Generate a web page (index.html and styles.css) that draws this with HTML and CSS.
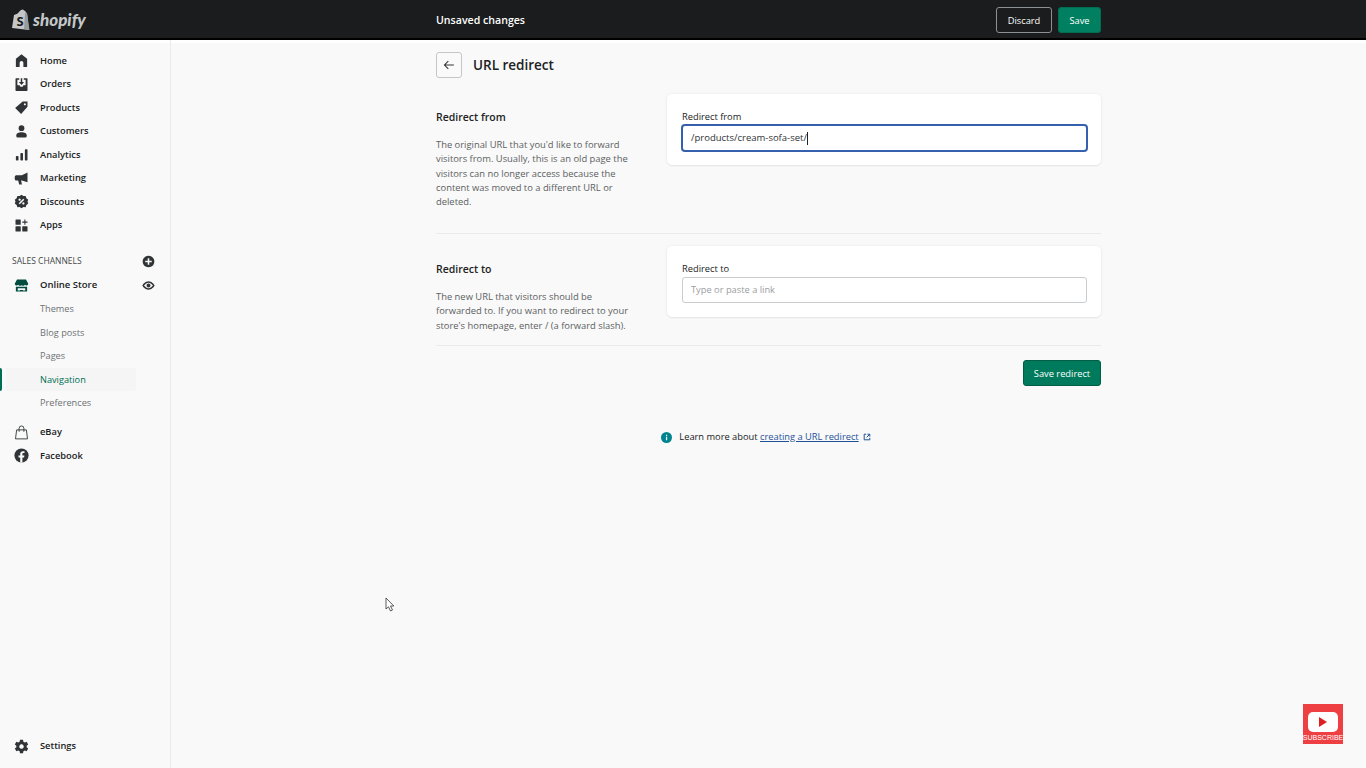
FILE: index.html
```html
<!doctype html>
<html>
<head>
    <meta charset="utf-8">
    <title>URL redirect</title>
    <link rel="stylesheet" href="styles.css">
</head>
<body>
<header class="topbar">
    <div class="logo">
        <svg class="logoBag" viewBox="0 0 20 22">
            <path fill="#c4c7c8" d="M1 19 3 6q4-1 5-3 1.500-2.500 3.500-2.500 1 0 1.500 1 1.500 0 2 2l1 .5L18 21z"/>
            <path fill="#989b9d" d="M14 3.800 16 4.300 18.500 21 13 20z"/>
            <text x="5.500" y="16.500" class="logoS">S</text>
        </svg>
        <span class="logoText">shopify</span>
    </div>
    <div class="barTitle">Unsaved changes</div>
    <div class="barActions">
        <button class="buttonDiscard">Discard</button>
        <button class="buttonSave">Save</button>
    </div>
</header>
<div class="frame">
    <nav class="sidebar">
        <a class="navItem">
            <svg class="navIcon" viewBox="0 0 20 20"><path d="M10 1.500 2.500 7.500V18.500H7.500V13a2.500 2.500 0 0 1 5 0V18.500H17.500V7.500z"/></svg>Home</a>
        <a class="navItem">
            <svg class="navIcon" viewBox="0 0 20 20"><path d="M3 1.500H7V3.500H4.500V11H7.500L8.500 13H11.500L12.500 11H15.500V3.500H13V1.500H17A1 1 0 0 1 18 2.500V17.500A1 1 0 0 1 17 18.500H3A1 1 0 0 1 2 17.500V2.500A1 1 0 0 1 3 1.500Z"/><path d="M9 1.500H11V6.500H13.500L10 10.500 6.500 6.500H9Z"/></svg>Orders</a>
        <a class="navItem">
            <svg class="navIcon" viewBox="0 0 20 20"><path fill-rule="evenodd" d="M11.500 2H18V9L9.500 18.500 1.500 10.500ZM14.500 4.200a1.400 1.400 0 1 0 .01 0Z"/></svg>Products</a>
        <a class="navItem">
            <svg class="navIcon" viewBox="0 0 20 20"><circle cx="10" cy="5.500" r="3.800"/><path d="M3 15.500C3 12 6 11 10 11S17 12 17 15.500V16A2 2 0 0 1 15 18H5A2 2 0 0 1 3 16Z"/></svg>Customers</a>
        <a class="navItem">
            <svg class="navIcon" viewBox="0 0 20 20"><rect x="2.500" y="12" width="3.500" height="6" rx="1"/><rect x="8.500" y="8" width="3.500" height="10" rx="1"/><rect x="14.500" y="3" width="3.500" height="15" rx="1"/></svg>Analytics</a>
        <a class="navItem">
            <svg class="navIcon" viewBox="0 0 20 20"><path d="M18 2V15L10.500 12.500H9.500L10.500 18H7L5.500 12.500H3A2 2 0 0 1 1 10.500V7.500A2 2 0 0 1 3 5.500H10.500Z"/></svg>Marketing</a>
        <a class="navItem">
            <svg class="navIcon" viewBox="0 0 20 20"><path fill-rule="evenodd" d="M10 1 12.500 2.800 15.500 2.500 16.500 5.500 19 7.500 18 10 19 12.500 16.500 14.500 15.500 17.500 12.500 17.200 10 19 7.500 17.200 4.500 17.500 3.500 14.500 1 12.500 2 10 1 7.500 3.500 5.500 4.500 2.500 7.500 2.800ZM12.300 6.300 6.300 12.300 7.700 13.700 13.700 7.700ZM7.500 6a1.500 1.500 0 1 0 .01 0ZM12.500 11a1.500 1.500 0 1 0 .01 0Z"/></svg>Discounts</a>
        <a class="navItem">
            <svg class="navIcon" viewBox="0 0 20 20"><rect x="2" y="2" width="7" height="7" rx=".8"/><rect x="2" y="11" width="7" height="7" rx=".8"/><rect x="11" y="11" width="7" height="7" rx=".8"/><path d="M13.800 2H15.200V4.800H18V6.200H15.200V9H13.800V6.200H11V4.800H13.800Z"/></svg>Apps</a>

        <div class="channels">
            <span>SALES CHANNELS</span>
            <svg class="sideAction" viewBox="0 0 20 20"><path fill-rule="evenodd" d="M10 1a9 9 0 1 0 .01 0ZM8.800 5H11.200V8.800H15V11.200H11.200V15H8.800V11.200H5V8.800H8.800Z"/></svg>
        </div>
        <a class="navItem storeItem">
            <svg class="navIcon" viewBox="0 0 20 20"><path class="storeFill" d="M4 2H16L19 7.500A2.500 2.500 0 0 1 14.500 9 2.800 2.800 0 0 1 10 9.500 2.800 2.800 0 0 1 5.500 9 2.500 2.500 0 0 1 1 7.500Z"/><path class="storeFill" d="M2.500 11.500H5V18H2.500ZM15 11.500H17.500V18H15ZM5 11.500H15V13.500H5ZM8 16H12V18H8ZM5 16.500H8V18H5ZM12 16.500H15V18H12Z"/></svg>
            <span class="navGrow">Online Store</span>
            <svg class="sideAction" viewBox="0 0 20 20"><path fill-rule="evenodd" d="M10 3.500C5 3.500 1.500 8 .5 10 1.500 12 5 16.500 10 16.500S18.500 12 19.500 10C18.500 8 15 3.500 10 3.500ZM10 5.800C13 5.800 15.500 8.500 16.900 10 15.500 11.500 13 14.200 10 14.200S4.500 11.500 3.100 10C4.500 8.500 7 5.800 10 5.800ZM10 7a3 3 0 1 0 .01 0Z"/></svg>
        </a>
        <a class="subItem">Themes</a>
        <a class="subItem">Blog posts</a>
        <a class="subItem">Pages</a>
        <a class="subItem subActive">Navigation</a>
        <a class="subItem">Preferences</a>
        <a class="navItem ebayItem">
            <svg class="navIcon" viewBox="0 0 20 20"><path class="bagLine" d="M3.500 6.500H16.500L18 18.500H2ZM6.800 9V4.500a3.200 3.200 0 0 1 6.400 0V9"/></svg>eBay</a>
        <a class="navItem">
            <svg class="navIcon" viewBox="0 0 20 20"><circle cx="10" cy="10" r="9.500"/><path class="fbF" d="M8.300 19.500V12.500H6V10H8.300V8C8.300 5.500 9.700 4.300 12 4.300H14V6.800H12.700C11.600 6.800 11.200 7.300 11.200 8.200V10H13.900L13.400 12.500H11.200V19.500Z"/></svg>Facebook</a>
        <a class="navItem settingsItem">
            <svg class="navIcon" viewBox="0 0 20 20"><path fill-rule="evenodd" d="M8 1H12L12.500 3.600 14.400 4.700 16.900 3.800 18.900 7.200 16.900 8.900V11.100L18.900 12.800 16.900 16.200 14.400 15.300 12.500 16.400 12 19H8L7.500 16.400 5.600 15.300 3.100 16.200 1.100 12.800 3.100 11.100V8.900L1.100 7.200 3.100 3.800 5.600 4.700 7.500 3.600ZM10 7a3 3 0 1 0 .01 0Z"/></svg>Settings</a>
    </nav>
    <main class="main">
        <div class="page">
            <div class="pageHeader">
                <button class="backButton">
                    <svg viewBox="0 0 20 20"><path d="M17 10H3.500M9 4.500 3.500 10 9 15.500"/></svg>
                </button>
                <h1>URL redirect</h1>
            </div>
            <section class="formRow firstRow">
                <div class="rowInfo">
                    <h2>Redirect from</h2>
                    <p>The original URL that you'd like to forward visitors from. Usually, this is an old page the visitors can no longer access because the content was moved to a different URL or deleted.</p>
                </div>
                <div class="card">
                    <label>Redirect from</label>
                    <div class="inputFocus">/products/cream-sofa-set/<span class="caret"></span></div>
                </div>
            </section>
            <section class="formRow secondRow">
                <div class="rowInfo">
                    <h2>Redirect to</h2>
                    <p>The new URL that visitors should be forwarded to. If you want to redirect to your store's homepage, enter / (a forward slash).</p>
                </div>
                <div class="card">
                    <label>Redirect to</label>
                    <div class="inputEmpty">Type or paste a link</div>
                </div>
            </section>
            <div class="pageActions">
                <button class="buttonSaveRedirect">Save redirect</button>
            </div>
            <div class="learnMore">
                <svg class="infoIcon" viewBox="0 0 20 20"><circle cx="10" cy="10" r="10"/><rect class="infoMark" x="9" y="8.500" width="2.200" height="6.500"/><rect class="infoMark" x="9" y="5" width="2.200" height="2.200"/></svg>
                <span>Learn more about <a class="learnLink">creating a URL redirect</a></span>
                <svg class="extIcon" viewBox="0 0 20 20"><path d="M8 3H3V17H17V12M11 3H17V9M17 3 9 11"/></svg>
            </div>
        </div>
    </main>
</div>
<svg class="cursor" viewBox="0 0 10 15"><path d="M1 1V12L3.500 9.800 5.500 14 7.500 13 5.500 9H8.800Z"/></svg>
<div class="subscribe">
    <div class="playBox"><span class="playTriangle"></span></div>
    <div class="subscribeText">SUBSCRIBE</div>
</div>
</body>
</html>
```

FILE: styles.css
```css
html, body {
    margin: 0;
    height: 100%;
    overflow: hidden;
}

body {
    display: flex;
    flex-direction: column;
    color: #202223;
    background-color: #f9f9f9;
    font-family: "Open Sans", "Noto Sans", sans-serif;
    font-size: 9.3px;
    line-height: 14.300px;
}

button {
    font-family: inherit;
    font-size: 9.3px;
    padding: 0;
    cursor: pointer;
}

/* top bar */
.topbar {
    flex: none;
    box-sizing: border-box;
    height: 40px;
    padding-top: 2px;
    display: flex;
    align-items: center;
    background-color: #1a1c1d;
    border-bottom: 2px solid #000;
    color: #fff;
}

.logo {
    width: 436px;
    display: flex;
    align-items: center;
    padding-left: 11px;
    box-sizing: border-box;
}

.logoBag {
    width: 20px;
    height: 22px;
    margin-right: 2px;
}

.logoS {
    font-family: "Open Sans", sans-serif;
    font-size: 13px;
    font-weight: 700;
    fill: #1a1c1d;
}

.logoText {
    font-family: "Lato", sans-serif;
    font-size: 17px;
    font-weight: 900;
    font-style: italic;
    color: #c4c7c8;
}

.barTitle {
    font-size: 10.600px;
    font-weight: 600;
    flex: 1;
}

.barActions {
    display: flex;
    gap: 6px;
    margin-right: 265px;
}

.buttonDiscard {
    width: 56px;
    height: 26px;
    color: #fff;
    background-color: #1a1c1d;
    border: 1px solid #8c9196;
    border-radius: 3px;
}

.buttonSave {
    width: 43px;
    height: 26px;
    color: #fff;
    background-color: #008060;
    border: 1px solid #006e52;
    border-radius: 3px;
}

/* sidebar */
.frame {
    flex: 1;
    display: flex;
    min-height: 0;
    box-shadow: inset 0 3px 0 #fff;
}

.sidebar {
    flex: none;
    box-sizing: border-box;
    width: 171px;
    display: flex;
    flex-direction: column;
    padding-top: 9.200px;
    border-right: 1px solid #ebebeb;
}

.navItem {
    height: 23.500px;
    display: flex;
    align-items: center;
    padding-left: 14px;
    font-weight: 600;
    color: #202223;
}

.navIcon {
    width: 15px;
    height: 15px;
    margin-right: 11px;
    fill: #303436;
    flex: none;
}

.navGrow {
    flex: 1;
    font-size: 9.500px;
}

.channels {
    display: flex;
    align-items: center;
    justify-content: space-between;
    height: 14px;
    margin-top: 17.300px;
    padding: 0 15px 0 12px;
    font-size: 8.500px;
    color: #44474a;
}

.sideAction {
    width: 13px;
    height: 13px;
    fill: #303436;
}

.storeItem {
    margin-top: 5px;
    margin-bottom: 0.500px;
    padding-right: 15px;
}

.storeFill {
    fill: #004c3f;
}

.subItem {
    height: 23.500px;
    display: flex;
    align-items: center;
    padding-left: 40px;
    margin-right: 34px;
    font-size: 9.200px;
    color: #6d7175;
    position: relative;
}

.subActive {
    color: #006e52;
    background-color: #f4f5f4;
    border-radius: 0 3px 3px 0;
    margin-left: 6px;
    padding-left: 34px;
}

.subActive::before {
    content: "";
    position: absolute;
    left: -6px;
    top: 0;
    bottom: 0;
    width: 2px;
    background-color: #006e52;
    border-radius: 0 2px 2px 0;
}

.ebayItem {
    margin-top: 5.500px;
}

.bagLine {
    fill: none;
    stroke: #303436;
    stroke-width: 1.200;
}

.fbF {
    fill: #f9f9f9;
}

.settingsItem {
    margin-top: auto;
    margin-bottom: 10px;
}

/* main column */
.main {
    flex: 1;
    min-width: 0;
}

.page {
    width: 665px;
    margin: 0 auto;
}

.pageHeader {
    display: flex;
    align-items: center;
    padding-top: 12px;
    margin-bottom: 16px;
}

.backButton {
    box-sizing: border-box;
    width: 26px;
    height: 26px;
    margin-right: 11px;
    background-color: #fafafa;
    border: 1px solid #c4c7c9;
    border-radius: 3px;
    display: flex;
    align-items: center;
    justify-content: center;
}

.backButton svg {
    width: 14px;
    height: 14px;
    fill: none;
    stroke: #303436;
    stroke-width: 1.500;
}

h1 {
    margin: 0;
    padding-top: 1px;
    font-size: 13.500px;
    font-weight: 600;
    line-height: 25px;
    color: #202223;
}

.formRow {
    display: flex;
    justify-content: space-between;
    align-items: flex-start;
}

.firstRow {
    height: 139px;
    border-bottom: 1px solid #ebebeb;
}

.secondRow {
    height: 99px;
    padding-top: 12px;
    border-bottom: 1px solid #ebebeb;
}

.rowInfo {
    width: 200px;
    padding-top: 16px;
}

h2 {
    margin: 0 0 14px;
    font-size: 10.500px;
    font-weight: 600;
    line-height: 14px;
}

.rowInfo p {
    margin: 0;
    font-size: 9.400px;
    color: #5c5f62;
}

.card {
    box-sizing: border-box;
    width: 434px;
    height: 71px;
    padding: 15.500px 15px 0;
    background-color: #fff;
    border-radius: 5px;
    box-shadow: 0 0 3px rgba(23, 24, 24, 0.07), 0 1px 2px rgba(0, 0, 0, 0.06);
}

label {
    display: block;
    color: #202223;
    line-height: 14px;
}

.inputFocus {
    box-sizing: border-box;
    height: 28px;
    margin: 0.500px -2px 0 -1px;
    padding: 0 8px;
    display: flex;
    align-items: center;
    font-size: 9.500px;
    color: #303436;
    border: 2px solid #3560ad;
    border-radius: 4px;
}

.caret {
    width: 1px;
    height: 13px;
    background-color: #202223;
}

.inputEmpty {
    box-sizing: border-box;
    height: 26px;
    margin: 1.500px -1px 0 0;
    padding: 0 8px;
    display: flex;
    align-items: center;
    color: #9a9da0;
    border: 1px solid #c9cccf;
    border-radius: 3px;
}

.pageActions {
    display: flex;
    justify-content: flex-end;
    padding-top: 14px;
}

.buttonSaveRedirect {
    width: 78px;
    height: 26px;
    color: #fff;
    background-color: #007a5c;
    border: 1px solid #005e46;
    border-radius: 3px;
}

.learnMore {
    display: flex;
    align-items: center;
    justify-content: center;
    margin-top: 44px;
    padding-right: 5px;
    height: 14px;
    color: #202223;
}

.infoIcon {
    width: 11px;
    height: 11px;
    margin-right: 7px;
    fill: #00848e;
}

.infoMark {
    fill: #fff;
}

.learnLink {
    color: #1f5199;
    text-decoration: underline;
}

.extIcon {
    width: 8px;
    height: 8px;
    margin-left: 4px;
    fill: none;
    stroke: #1f5199;
    stroke-width: 2.500;
}

/* overlays */
.cursor {
    position: absolute;
    left: 385px;
    top: 597px;
    width: 10px;
    height: 15px;
    fill: #fff;
    stroke: #333;
    stroke-width: 0.800;
}

.subscribe {
    position: absolute;
    left: 1303px;
    top: 704px;
    width: 40px;
    height: 40px;
    background-color: #ee3f43;
    display: flex;
    flex-direction: column;
    align-items: center;
}

.playBox {
    width: 30px;
    height: 20px;
    margin-top: 8px;
    background-color: #fff;
    border-radius: 5px;
    display: flex;
    align-items: center;
    justify-content: center;
}

.playTriangle {
    width: 0;
    height: 0;
    border-left: 8px solid #e02020;
    border-top: 5px solid transparent;
    border-bottom: 5px solid transparent;
}

.subscribeText {
    font-family: "Liberation Sans", sans-serif;
    font-size: 7px;
    line-height: 9px;
    margin-top: 1px;
    color: #fff;
}
```
